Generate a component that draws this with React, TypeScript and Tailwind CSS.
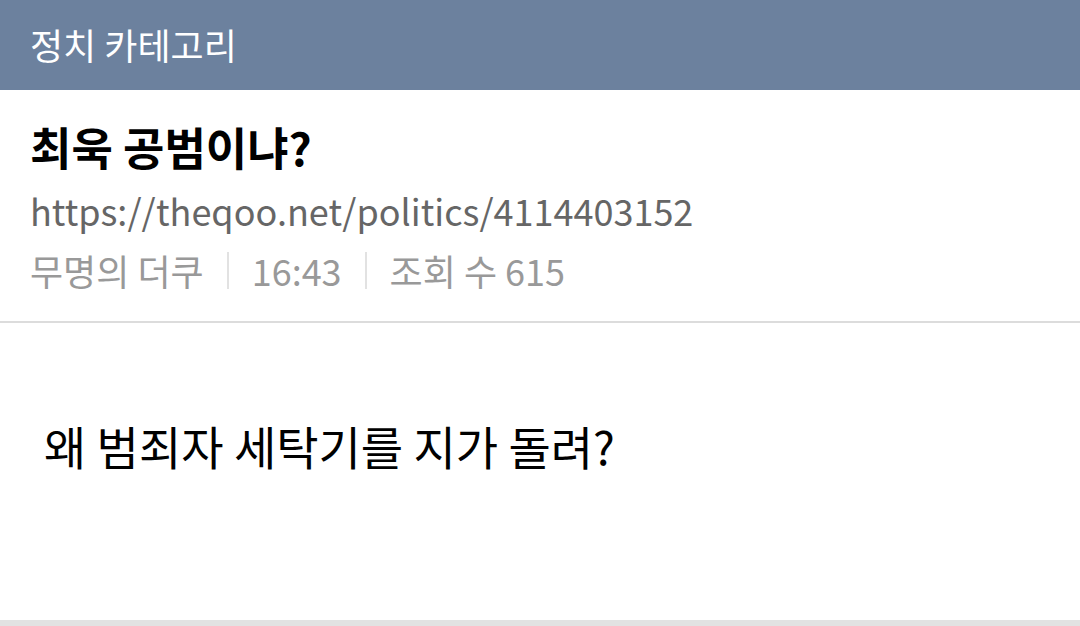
import React from 'react';

const font = { fontFamily: '"Noto Sans CJK KR", "Noto Sans", sans-serif' };

const Divider = () => <span className="mx-[23px] inline-block h-[37px] w-[2px] bg-[#e2e2e2]" />;

const App: React.FC = () => {
  return (
    <div className="flex h-[626px] w-[1080px] flex-col bg-white" style={font}>
      <header className="flex h-[90px] shrink-0 items-center bg-[#6c819e] px-[30px]">
        <h1 className="-mt-[2px] text-[36px] leading-none text-white">정치 카테고리</h1>
      </header>

      <section className="border-b-2 border-[#dcdcdc] px-[30px] pb-[21px] pt-[27px]">
        <h2 className="text-[45px] font-bold leading-[60px] text-black">최욱 공범이냐?</h2>
        <p className="mt-[3px] text-[36px] leading-[60px] text-[#666]">
          https://theqoo.net/politics/4114403152
        </p>
        <div className="flex items-center text-[36px] leading-[60px] text-[#999]">
          <span>무명의 더쿠</span>
          <Divider />
          <span>16:43</span>
          <Divider />
          <span>조회 수 615</span>
        </div>
      </section>

      <article className="flex-1 px-[44px] pt-[92px]">
        <p className="text-[46px] leading-[60px] text-black">왜 범죄자 세탁기를 지가 돌려?</p>
      </article>

      <div className="h-[6px] shrink-0 bg-[#e2e2e2]" />
    </div>
  );
};

export default App;
